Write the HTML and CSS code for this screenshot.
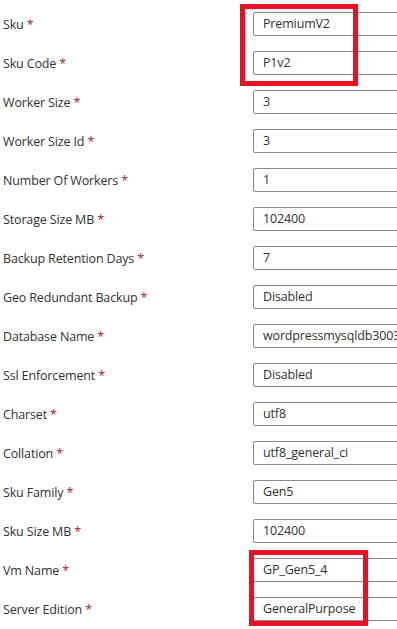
FILE: index.html
```html
<!DOCTYPE html>
<html lang="en">
<head>
    <meta charset="UTF-8">
    <meta name="viewport" content="width=device-width, initial-scale=1.0">
    <title>Parameters</title>
    <link rel="stylesheet" href="styles.css">
</head>
<body>
    <div class="param-form">
        <div class="param-row"><label class="param-label">Sku <span class="req">*</span></label><div class="param-value">PremiumV2</div></div>
        <div class="param-row"><label class="param-label">Sku Code <span class="req">*</span></label><div class="param-value">P1v2</div></div>
        <div class="param-row"><label class="param-label">Worker Size <span class="req">*</span></label><div class="param-value">3</div></div>
        <div class="param-row"><label class="param-label">Worker Size Id <span class="req">*</span></label><div class="param-value">3</div></div>
        <div class="param-row"><label class="param-label">Number Of Workers <span class="req">*</span></label><div class="param-value">1</div></div>
        <div class="param-row"><label class="param-label">Storage Size MB <span class="req">*</span></label><div class="param-value">102400</div></div>
        <div class="param-row"><label class="param-label">Backup Retention Days <span class="req">*</span></label><div class="param-value">7</div></div>
        <div class="param-row"><label class="param-label">Geo Redundant Backup <span class="req">*</span></label><div class="param-value">Disabled</div></div>
        <div class="param-row"><label class="param-label">Database Name <span class="req">*</span></label><div class="param-value">wordpressmysqldb3003</div></div>
        <div class="param-row"><label class="param-label">Ssl Enforcement <span class="req">*</span></label><div class="param-value">Disabled</div></div>
        <div class="param-row"><label class="param-label">Charset <span class="req">*</span></label><div class="param-value">utf8</div></div>
        <div class="param-row"><label class="param-label">Collation <span class="req">*</span></label><div class="param-value">utf8_general_ci</div></div>
        <div class="param-row"><label class="param-label">Sku Family <span class="req">*</span></label><div class="param-value">Gen5</div></div>
        <div class="param-row"><label class="param-label">Sku Size MB <span class="req">*</span></label><div class="param-value">102400</div></div>
        <div class="param-row"><label class="param-label">Vm Name <span class="req">*</span></label><div class="param-value">GP_Gen5_4</div></div>
        <div class="param-row"><label class="param-label">Server Edition <span class="req">*</span></label><div class="param-value">GeneralPurpose</div></div>
    </div>

    <!-- highlight boxes -->
    <div class="highlight highlight-sku"></div>
    <div class="highlight highlight-vm"></div>
</body>
</html>
```

FILE: styles.css
```css
* {
    margin: 0;
    padding: 0;
    box-sizing: border-box;
}

html, body {
    width: 397px;
    height: 629px;
    overflow: hidden;
}

body {
    position: relative;
    background: #fff;
    font-family: "Open Sans", "Noto Sans", sans-serif;
    font-size: 12.5px;
    letter-spacing: -0.15px;
    color: #323130;
}

.param-form {
    display: flex;
    flex-direction: column;
    gap: 15px;
    padding: 12px 0 0 3px;
}

.param-row {
    display: flex;
    align-items: center;
    height: 24px;
}

.param-label {
    width: 250px;
    flex: none;
    white-space: nowrap;
}

.req {
    color: #a4262c;
}

.param-value {
    flex: none;
    width: 220px;
    height: 24px;
    line-height: 22px;
    padding: 0 9px;
    border: 1px solid #8a8886;
    border-radius: 2px;
    white-space: nowrap;
    overflow: hidden;
}

.highlight {
    position: absolute;
    border: 5px solid #e81123;
}

.highlight-sku {
    left: 240px;
    top: 4px;
    width: 118px;
    height: 82px;
}

.highlight-vm {
    left: 249px;
    top: 550px;
    width: 119px;
    height: 76px;
}
```
